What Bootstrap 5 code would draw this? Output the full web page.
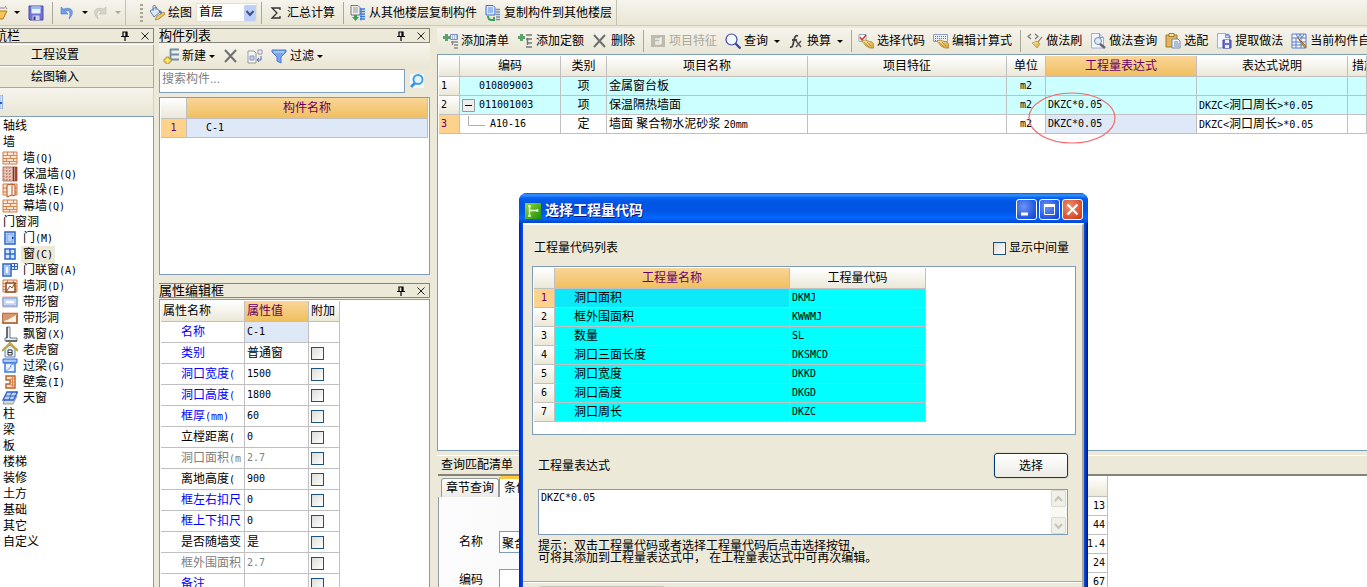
<!DOCTYPE html>
<html lang="zh-CN">
<head>
<meta charset="utf-8">
<meta name="viewport" content="width=device-width, initial-scale=1">
<title>选择工程量代码</title>
<link rel="stylesheet" href="https://cdn.jsdelivr.net/npm/bootstrap@5.3.0/dist/css/bootstrap.min.css">
<style>
  :root { --face:#ece9d8; --edge:#7f9db9; --grid:#c0c0c0; --hot:#660066; }
  body { font:12px/16px "Liberation Sans","Noto Sans CJK SC",sans-serif; color:#000; background:var(--face); overflow:hidden; }
  .mo { font-family:"DejaVu Sans Mono","Noto Sans CJK SC",monospace; font-size:10px; }
  .mo .cn { font-size:12px; }
  button, input, select, textarea { font:inherit; color:inherit; }
  svg { flex:none; display:block; }
  .ico { width:16px; height:16px; }

  .bar { background:linear-gradient(#f6f4ec,#e9e6d5); white-space:nowrap; }
  .bar .btn { --bs-btn-padding-x:0; --bs-btn-padding-y:0; --bs-btn-font-size:12px; --bs-btn-line-height:16px; --bs-btn-border-width:0; --bs-btn-border-radius:0; --bs-btn-color:#000;
    display:inline-flex; align-items:center; gap:3px; flex:none; margin-right:8px; }
  .bar .btn:disabled { color:#aca899; opacity:1; }
  .rule { width:1px; height:22px; background:#aca899; margin-right:6px; flex:none; }
  .caret { border:3px solid transparent; border-top-color:#000; border-bottom:0; margin-left:3px; }
  .caret-off { border-top-color:#aca899; }
  .top-bar { height:26px; border-bottom:1px solid #cfcbb8; }
  .top-set { height:25px; border-right:1px solid #c5c2b0; }
  .grip { width:3px; height:18px; margin:0 6px; background:repeating-linear-gradient(#a9a695 0 2px,transparent 2px 4px); }
  .floor { width:61px; height:19px; border:1px solid #e4e1d0; appearance:none; border-radius:0; padding:0 2px 2px; line-height:16px;
    background:url("data:image/svg+xml,%3Csvg xmlns='http://www.w3.org/2000/svg' width='12' height='16'%3E%3Crect width='12' height='16' rx='1' fill='%23bfd0f8'/%3E%3Cpath d='M2.500 6l3.500 4 3.500-4' fill='none' stroke='%23405088' stroke-width='2'/%3E%3C/svg%3E") right center no-repeat #fff; }
  .desk { min-height:0; padding-top:2px; }

  .cap-bar { height:15px; border:1px solid #85837a; font-size:13px; line-height:13px; white-space:nowrap; }
  .cap-bar button { border:0; background:none; padding:0; }
  .side { width:154px; }
  .side .cap-bar { margin-bottom:1px; }
  .clip-start { margin-left:-6px; }
  .side-btn { height:22px; border:1px solid #aca899; border-width:1px 1px 1px 0; border-top-color:#fff; background:var(--face); padding:0 43px 0 0; }
  .side-tools { height:28px; border-right:1px solid #d5d1bd; }
  .tree { background:#fff; border:1px solid var(--edge); border-width:1px 1px 0 0; padding-top:1px; }
  .tree li { height:16px; display:flex; align-items:center; padding-left:3px; white-space:nowrap; }
  .tree li.kid { padding-left:2px; gap:3px; }
  .tree .now { background:var(--face); }
  .tree li.kid > span { padding:0 2px; }

  .mid { width:271px; margin-left:5px; }
  .mid-tools { height:26px; }
  .well { background:#fff; border:1px solid var(--edge); }
  .find { height:24px; border:1px solid var(--edge); padding:0 2px 4px; width:246px; border-radius:0; }
  .find::placeholder { color:#808080; opacity:1; }
  .comp-box { height:178px; padding:0 1px; }
  .prop-box { margin-top:1px; padding:1px; }

  .sheet { table-layout:fixed; border-collapse:separate; border-spacing:0; white-space:nowrap; }
  .sheet th, .sheet td { border:solid var(--grid); border-width:0 1px 1px 0; padding:0 2px; overflow:hidden; height:19px; line-height:16px; font-weight:400; }
  .sheet thead th { height:21px; text-align:center; background:linear-gradient(#fff,#f3f1e8 60%,#ebe8d7); }
  .sheet thead th.hot { background:linear-gradient(#f9d598,#f0bf5f); color:var(--hot); }
  .sheet tbody th { background:linear-gradient(#fff,#ebe8d7); }
  .sheet tbody th.hot { background:#ffd28c; color:var(--hot); }
  .sheet .pick { background:#dfe8f6; }
  .sheet td.inset { padding-left:19px; }
  .aqua td { background:#ccffff; }
  .cyan td { background:#00ffff; }
  .cyan td.first-cell { background:#0ce9f9; }
  .props { width:179px; }
  .props th, .props td { height:21px; }
  .props tbody th { background:#fff; padding-left:20px; text-align:left; }
  .props .user { color:#0000ff; }
  .props .off { color:#808080; }
  .tick { appearance:none; width:13px; height:13px; border:1px solid #1c5180; background:linear-gradient(135deg,#dcdcd7,#fff); margin:0; display:block; flex:none; }

  .work { margin-left:7px; min-width:0; }
  .main-tools { height:26px; padding-left:5px; }
  .bill-box { padding:1px 0 0 1px; }
  .dock { height:132px; border-top:1px solid #fff; }
  .dock-cap { height:18px; line-height:18px; }
  .dock-body { border-top:2px solid #85837a; margin-left:1px; }
  .tab-strip { height:21px; padding-left:3px; background:var(--face); }
  .tab-strip button { height:19px; border:1px solid #919b9c; border-width:1px 1px 0 1px; border-radius:3px 3px 0 0; background:linear-gradient(#fff,#ecebe6); padding:0 4px; }
  .tab-strip button.on { height:21px; border-top:3px solid #ffc73c; background:#fcfcfe; }
  .form-side { width:300px; padding:34px 0 0 20px; background:linear-gradient(90deg,#fcfcfe,#f4f3ee); border-left:1px solid #919b9c; }
  .res { width:370px; }
  .box { border:1px solid var(--edge); height:22px; border-radius:0; padding:0 2px; background:#fff; }

  .loop { left:1028px; top:92px; width:88px; height:52px; pointer-events:none; }
  .dlg { left:519px; top:193px; width:569px; border-radius:8px 8px 0 0; background:linear-gradient(90deg,#0019cf,#0855dd 4px,#0855dd 565px,#00138c); padding:0 4px; }
  .dlg-top { height:30px; margin:0 -4px; padding:6px 5px 0 6px; border-radius:8px 8px 0 0; background:linear-gradient(#0058e6,#3a93ff 2px,#0262ee 5px,#0054e3 10px,#0055e5 18px,#0268ff 25px,#0144d0); }
  .dlg-title { font-size:14px; line-height:14px; font-weight:700; color:#fff; text-shadow:1px 1px #0a1883; }
  .dlg-top .btn-set { gap:2px; }
  .win-btn { width:21px; height:21px; padding:0; border:1px solid #fff; border-radius:3px; background:radial-gradient(circle at 35% 35%,#6d93f2,#2a5de4 60%,#0a3fc9); }
  .win-btn.shut { background:radial-gradient(circle at 35% 35%,#f0906e,#df5433 60%,#c23a10); }
  .dlg-body { background:var(--face); border-top:2px solid #fff; border-right:2px solid #aca899; min-height:400px; }
  .list-head { padding:15px 13px 10px 11px; }
  .list-head .tick { margin-right:3px; }
  .code-box { height:169px; margin:0 6px 0 9px; padding:1px; }
  .code-box .sheet { width:392px; }
  .expr-head { padding:18px 14px 11px 15px; }
  .expr-wrap { margin:0 14px 0 15px; }
  .pick-btn { width:74px; height:25px; border:1px solid #003c74; border-radius:3px; background:linear-gradient(#fff,#ecebe5); box-shadow:0 0 0 1px #dfdccb; }
  .expr { height:46px; resize:none; border:1px solid var(--edge); border-radius:0; padding:0 2px; line-height:16px; display:block; overflow:hidden; }
  .scroller { right:1px; top:1px; bottom:1px; width:17px; background:#f8f8f4; }
  .scroller button { width:15px; height:17px; border:1px solid #dcdacb; border-radius:2px; background:#f1f0e8; padding:0; }
  .hint { line-height:12px; padding:5px 15px 17px; }
  .foot { border-top:1px solid #aca899; box-shadow:inset 0 1px #fff; padding:4px 15px; }
  .foot button { width:128px; height:24px; border:1px solid #c9c7ba; border-radius:3px; background:#f1efe4; }
</style>
</head>
<body>
<svg width="0" height="0" class="position-absolute" aria-hidden="true">
  <defs>
    <linearGradient id="gb" x2="1" y2="1"><stop stop-color="#e8f2ff"/><stop offset="1" stop-color="#5b92ea"/></linearGradient>
    <linearGradient id="gy" x2="1" y2="1"><stop stop-color="#fff2b0"/><stop offset="1" stop-color="#d99a2c"/></linearGradient>
    <linearGradient id="gg" x2="1" y2="1"><stop stop-color="#8fe02c"/><stop offset="1" stop-color="#1f8a10"/></linearGradient>
  </defs>
  <symbol id="pin" viewBox="0 0 8 10"><path d="M2 1h4v4.500h-4zM5 1v5M0 5.500h8M4 6v4" fill="none" stroke="#000" stroke-width="1.200"/></symbol>
  <symbol id="shut" viewBox="0 0 8 8"><path d="M.500.500l7 7M7.500.500l-7 7" stroke="#222" fill="none"/></symbol>
  <symbol id="save" viewBox="0 0 16 16"><path d="M1 1h14v14H2l-1-1z" fill="#6f72d2" stroke="#4a4ca8"/><path d="M3.500 1.500h9v7h-9z" fill="#e9effc"/><path d="M4.500 10.500h7V15h-7z" fill="#cfd3ea"/><path d="M5.500 11.500h2V15h-2z" fill="#333a80"/><path d="M4 3h8" stroke="#8ec0f5" stroke-width="2"/></symbol>
  <symbol id="undo" viewBox="0 0 16 16"><path d="M2 2v7h7L6.500 6.500C10 4 12.500 7 10 14c6-6 4-13-5.500-10z" fill="#6f9de8" stroke="#4e7dcc" stroke-width=".6"/></symbol>
  <symbol id="redo" viewBox="0 0 16 16"><path d="M14 2v7H7l2.500-2.500C6 4 3.500 7 6 14 0 8 2 1 11.500 4z" fill="#d6d5cd" stroke="#bdbcb2" stroke-width=".6"/></symbol>
  <symbol id="paint" viewBox="0 0 16 16"><path d="M1 6l6-4 4 5-6 5z" fill="#dbe7f8" stroke="#6480ae"/><path d="M4 6V1.500C4 0 7 0 7 2v3" fill="none" stroke="#6480ae"/><path d="M10 6c3 1 3 4 1 6" stroke="#5577b8" stroke-width="2" fill="none"/><path d="M6 15l2-4 7-4 1 2-6 5z" fill="url(#gy)" stroke="#a87a26" stroke-width=".7"/></symbol>
  <symbol id="down" viewBox="0 0 16 16"><path d="M1 .500h7l2 2V10H1z" fill="#eee" stroke="#777"/><path d="M3 3h5M3 5h5M3 7h5" stroke="#999"/><path d="M10 4h5M10 6.500h5M10 9h5M10 11.500h5M10 14h5" stroke="#3d78dd" stroke-width="1.600"/><path d="M11 3.500v12" stroke="#3d78dd"/><path d="M4 10h3v2h2l-3.500 4L2 12h2z" fill="#37a057"/></symbol>
  <symbol id="across" viewBox="0 0 16 16"><path d="M1 .500h7l2 2V10H1z" fill="#dce9ff" stroke="#3c6dcc"/><path d="M3 3h5M3 5h5M3 7h5" stroke="#5d8de0"/><path d="M11 4.500h4M11 7h4M11 9.500h4M11 12h4M11 14.500h4" stroke="#7c8da8" stroke-width="1.600"/><path d="M3 11c0 3 2 4 4 4h2v-3" fill="none" stroke="#37a057" stroke-width="2"/></symbol>
  <symbol id="new" viewBox="0 0 16 16"><path d="M7 1.500h9M7 6.500h9M7 11.500h9M7.500 1v11" stroke="#6d8fa8" stroke-width="1.800" fill="none"/><path d="M3 9h3v2h2v3H6v2H3v-2H1v-3h2z" fill="#ffe36a" stroke="#a88a1c" stroke-width=".8"/></symbol>
  <symbol id="del" viewBox="0 0 16 16"><path d="M2 2l11 12M13 2L2 14" stroke="#6f6f6f" stroke-width="2" fill="none"/></symbol>
  <symbol id="copy" viewBox="0 0 16 16"><path d="M1 3h6l2 2v10H1z" fill="#f5f5f5" stroke="#999"/><path d="M3 8h4v4H3z" fill="#c7d3ea" stroke="#8898b8"/><path d="M11 2h4v4h-4z" fill="#eef" stroke="#99a"/><path d="M14 8v4h-3m1-2l-2 2 2 2" fill="none" stroke="#4568b8"/></symbol>
  <symbol id="funnel" viewBox="0 0 16 16"><path d="M1 2h14v2L10 9v6l-4-2V9L1 4z" fill="#78a7f0" stroke="#4a7ac8"/><path d="M3 4h10" stroke="#cfe1ff"/></symbol>
  <symbol id="lens" viewBox="0 0 16 16"><path d="M1 1h14v14H1z" fill="#f4f8fb"/><circle cx="9" cy="6.500" r="4.500" fill="#e6f4ff" stroke="#42a2e8" stroke-width="2"/><path d="M6 10l-4 4" stroke="#3a8fd8" stroke-width="2.600"/></symbol>
  <symbol id="look" viewBox="0 0 16 16"><circle cx="6.500" cy="6.500" r="5.500" fill="#f2f8ff" stroke="#3c46a8" stroke-width="1.200"/><path d="M10.500 10.500l5 5" stroke="#3a3aa5" stroke-width="2.200"/></symbol>
  <symbol id="addl" viewBox="0 0 16 16"><path d="M3 1h3v2h2v3H6v2H3V6H1V3h2z" fill="#5f9f68"/><path d="M8.500 1.500h7v5h-7z" fill="#dfe9f8" stroke="#7d93bc"/><path d="M10 3h5M10 5h5" stroke="#7d93bc" stroke-dasharray="1 1"/><path d="M9 9h7M12 12h4M12 15h4M10.500 8v4" stroke="#8b8b8b" stroke-width="1.500"/></symbol>
  <symbol id="addq" viewBox="0 0 16 16"><path d="M3 1h3v2h2v3H6v2H3V6H1V3h2z" fill="#5f9f68"/><path d="M9 2h6M9 6h6M11 10h4M9 14h6M10.500 5v7" stroke="#777" stroke-width="1.500"/></symbol>
  <symbol id="feat" viewBox="0 0 16 16"><path d="M1 2h14v12H1z" fill="#bdbbb0"/><path d="M5 6h5v5H6V9h4M11 11V4" stroke="#f0efe8" fill="none" stroke-width="1.500"/></symbol>
  <symbol id="fx" viewBox="0 0 16 16"><path d="M2 14c3 1 3-3 4-7s2-5 4-4M4 7h5" fill="none" stroke="#444" stroke-width="1.800"/><path d="M8 8l5 6M13 8l-5 6" stroke="#555" stroke-width="1.500"/></symbol>
  <symbol id="hand" viewBox="0 0 16 16"><path d="M4 8l3-1 3 1 4 1 2 3v3h-4L8 13z" fill="url(#gy)" stroke="#a98530" stroke-width=".8"/><path d="M6 9l5 5M9 9l4 4" stroke="#a98530" stroke-width=".7"/></symbol>
  <symbol id="code" viewBox="0 0 16 16"><path d="M1 1.500h7v7H1z" fill="#fff" stroke="#98a5c0"/><path d="M2 4l2 3 4-5" fill="none" stroke="#d23b2d" stroke-width="1.500"/><use href="#hand"/></symbol>
  <symbol id="edit" viewBox="0 0 16 16"><path d="M.500 1.500h14v7H.500z" fill="#e8effb" stroke="#8fa2c6"/><path d="M2 3.500h12M2 5.500h12M2 7.500h6" stroke="#5c77ae" stroke-dasharray="1 1"/><use href="#hand"/></symbol>
  <symbol id="brush" viewBox="0 0 16 16"><path d="M4 1L1 3.500 4 6M8 1l3 2.500L8 6M15 4l-4 5" fill="none" stroke="#777" stroke-width="1.200"/><path d="M5 10l5-2 3 3-3 4z" fill="url(#gy)" stroke="#b08b35" stroke-width=".7"/></symbol>
  <symbol id="page" viewBox="0 0 16 16"><path d="M1.500.500h8l4 4V15h-12z" fill="#f2f7ff" stroke="#9cb0d8"/><path d="M9.500.500v4h4" fill="#c8daf8" stroke="#7f9ad0"/></symbol>
  <symbol id="seek" viewBox="0 0 16 16"><use href="#page"/><circle cx="8" cy="8" r="3.500" fill="#d9ecff" stroke="#7d8b9c"/><path d="M10 11l5 4" stroke="#5c6570" stroke-width="2.500"/></symbol>
  <symbol id="clip" viewBox="0 0 16 16"><path d="M1 2h11v12H1z" fill="#e2b45c" stroke="#a87822"/><path d="M4 .500h5v3H4z" fill="#f6e8b4" stroke="#a87822"/><path d="M7 6h6l2 2v7H7z" fill="#eef4ff" stroke="#7085ad"/><path d="M9 9h4M9 11h5M9 13h5" stroke="#7085ad"/></symbol>
  <symbol id="pull" viewBox="0 0 16 16"><use href="#page"/><path d="M7 7h8v8H7z" fill="#6a70cc" stroke="#4246a0"/><path d="M9 7h4v3H9zM9 12h4v3H9z" fill="#eef"/><path d="M14 5c0-3-2-4-4-3" fill="none" stroke="#6080c0" stroke-width="1.500"/></symbol>
  <symbol id="grid" viewBox="0 0 16 16"><path d="M1 1h14v14H1z" fill="#f3f7ff" stroke="#5a7dc8"/><path d="M1 5h14M1 9h14M1 12h14M5 5v10M10 5v10M5 1l2 4 2-4 2 4 2-4" stroke="#5a7dc8" fill="none"/><path d="M7 5l8 8-1 2z" fill="#e0aa3c" stroke="#9c6c20"/></symbol>
  <symbol id="brick" viewBox="0 0 16 16"><path d="M1 2h14v12H1z" fill="#fbe8d8" stroke="#cf7a42"/><path d="M1 5.500h14M1 8.500h14M1 11.500h14M5.500 2v3M11.500 2v3M8.500 5v3M4.500 8v3M11.500 8v3M7.500 11v3" stroke="#d8834c"/></symbol>
  <symbol id="warm" viewBox="0 0 16 16"><path d="M1 1h14v14H1z" fill="#e6c4b8" stroke="#b96c55"/><path d="M1 4.500h9M1 7.500h9M1 10.500h9M1 13.500h9M4.500 1v14M7.500 1v14" stroke="#c48a78" stroke-dasharray="2 1"/><path d="M11.500 1v14M14 1v14" stroke="#8e2c17" stroke-width="1.600"/></symbol>
  <symbol id="pier" viewBox="0 0 16 16"><path d="M1 2h14v11H1z" fill="#fbe2cf" stroke="#cf7a42"/><path d="M1 6h4M11 6h4M1 10h4M11 10h4" stroke="#cf7a42"/><path d="M5 3l5-1v11l-5 2zM10 2l3 1v10l-3 1" fill="#fff4ea" stroke="#b4521c"/></symbol>
  <symbol id="door" viewBox="0 0 16 16"><path d="M3 2h10v12H3z" fill="#d9e8ff" stroke="#2c62c8" stroke-width="1.500"/><path d="M5 4h6v8H5z" fill="#b5d2ff" stroke="#6fa0ec"/><path d="M10 8h1.500" stroke="#123a90" stroke-width="2"/></symbol>
  <symbol id="win" viewBox="0 0 16 16"><path d="M3 3h10v10H3zM8 3v10M3 8h10" fill="#d8e8ff" stroke="#2d66d2" stroke-width="1.500"/></symbol>
  <symbol id="dwin" viewBox="0 0 16 16"><path d="M1 2h8v12H1z" fill="#d9e8ff" stroke="#2c62c8" stroke-width="1.500"/><path d="M3 4h4v8H3z" fill="#eef5ff" stroke="#6fa0ec"/><path d="M9.500 1.500h6v6h-6zM12.500 1v7M9 4.500h6" fill="#e0ecff" stroke="#2c62c8"/></symbol>
  <symbol id="hole" viewBox="0 0 16 16"><use href="#brick"/><path d="M4 5h9v9H4z" fill="#fffaf4" stroke="#8e4a1c" stroke-width="1.500"/><path d="M4 14l4-6 2 2 3-5" fill="none" stroke="#8e4a1c"/></symbol>
  <symbol id="strip" viewBox="0 0 16 16"><path d="M0 2h16v12H0z" fill="#f8d2c6"/><path d="M1 4h14v8H1z" fill="#dce9ff" stroke="#5a8be0"/><path d="M3 6h10v4H3z" fill="#fff" stroke="#a5c0ee"/></symbol>
  <symbol id="slot" viewBox="0 0 16 16"><path d="M0 2h16v12H0z" fill="#f8d2c6"/><path d="M1 4h14v9H1z" fill="#fff1e3" stroke="#a4521e" stroke-width="1.500"/><path d="M1 11c5 0 8-4 14-6V4H1z" fill="#d39a70"/></symbol>
  <symbol id="bay" viewBox="0 0 16 16"><path d="M5 1h3v11h7v3H3v-3h2z" fill="#e8edf2" stroke="#6f7c88"/><path d="M5 1v11M4 15h11" stroke="#222"/></symbol>
  <symbol id="house" viewBox="0 0 16 16"><path d="M3 7v8h10V7L8 3z" fill="#e3eef6" stroke="#6d8797"/><path d="M0 9l8-8 8 8" fill="none" stroke="#c2a537" stroke-width="2"/><path d="M6 8h4v5H6zM6 10.500h4" fill="#fff" stroke="#334"/></symbol>
  <symbol id="lintel" viewBox="0 0 16 16"><path d="M1 1h14v4H1z" fill="#a9c9ff" stroke="#2d66d2"/><path d="M3 5h10v9H3z" fill="#e6f0ff" stroke="#3f78dc" stroke-width="1.500"/><path d="M4 13l4-3 1-3 3-1" stroke="#6a9bea" fill="none"/></symbol>
  <symbol id="niche" viewBox="0 0 16 16"><path d="M4 2h9v12H4v-4h4V6H4z" fill="#fde6d2" stroke="#b85f24" stroke-width="1.400"/><path d="M10.500 2v12M8 8h5M8 11h5M8 5h5" stroke="#cf8148"/></symbol>
  <symbol id="sky" viewBox="0 0 16 16"><path d="M4 6h11l-4 8H1z" fill="#d8d8d8" stroke="#999"/><path d="M5 2h10.500l-4 8H1z" fill="#b8d4ff" stroke="#2e60c8" stroke-width="1.300"/><path d="M10 2L7 10M3 6h11" stroke="#2e60c8"/></symbol>
</svg>

<div class="vh-100 d-flex flex-column overflow-hidden position-relative">

  <header class="bar top-bar d-flex flex-shrink-0">
    <div class="top-set d-flex align-items-center">
      <button class="btn" aria-label="打开"><svg width="8" height="16" viewBox="8 0 8 16"><path d="M3 6h12l-4 8H1z" fill="#f7c45a" stroke="#b07a1e"/><path d="M8 3h5M13 1l2 3" stroke="#888"/></svg><span class="caret"></span></button>
      <button class="btn me-1" aria-label="保存"><svg class="ico"><use href="#save"/></svg></button>
      <span class="rule ms-1"></span>
      <button class="btn me-1" aria-label="撤销"><svg class="ico"><use href="#undo"/></svg><span class="caret ms-1"></span></button>
      <button class="btn me-1" aria-label="恢复" disabled><svg class="ico"><use href="#redo"/></svg><span class="caret caret-off ms-1"></span></button>
    </div>
    <div class="top-set d-flex align-items-center ms-2">
      <span class="grip"></span>
      <button class="btn me-1"><svg class="ico"><use href="#paint"/></svg>绘图</button>
      <select class="floor me-1" aria-label="楼层"><option>首层</option></select>
      <span class="rule"></span>
      <button class="btn"><svg class="ico" viewBox="0 0 16 16"><path d="M12 5V3H4l5 5-5 5h8v-2" fill="none" stroke="#333" stroke-width="1.300"/></svg>汇总计算</button>
      <span class="rule"></span>
      <button class="btn"><svg class="ico"><use href="#down"/></svg>从其他楼层复制构件</button>
      <button class="btn me-1"><svg class="ico"><use href="#across"/></svg>复制构件到其他楼层</button>
    </div>
  </header>

  <div class="desk d-flex flex-grow-1">

    <nav class="side d-flex flex-column flex-shrink-0 overflow-hidden">
      <div class="cap-bar d-flex align-items-center border-start-0 flex-shrink-0">
        <span class="clip-start me-auto">航栏</span>
        <button class="me-2" aria-label="固定"><svg width="8" height="10"><use href="#pin"/></svg></button>
        <button class="ms-1 me-1" aria-label="关闭"><svg width="8" height="8"><use href="#shut"/></svg></button>
      </div>
      <button class="side-btn flex-shrink-0">工程设置</button>
      <button class="side-btn flex-shrink-0">绘图输入</button>
      <div class="bar side-tools d-flex align-items-center flex-shrink-0"><svg width="3" height="14"><path d="M0 0h2.500v14H0z" fill="#d6e6fb" stroke="#8fb3e6"/><path d="M0 8h2" stroke="#2a5fc0" stroke-width="2"/></svg></div>
      <ul class="tree list-unstyled mb-0 flex-grow-1">
        <li><span>轴线</span></li>
        <li><span>墙</span></li>
        <li class="kid"><svg class="ico"><use href="#brick"/></svg><span>墙<span class="mo">(Q)</span></span></li>
        <li class="kid"><svg class="ico"><use href="#warm"/></svg><span>保温墙<span class="mo">(Q)</span></span></li>
        <li class="kid"><svg class="ico"><use href="#pier"/></svg><span>墙垛<span class="mo">(E)</span></span></li>
        <li class="kid"><svg class="ico"><use href="#brick"/></svg><span>幕墙<span class="mo">(Q)</span></span></li>
        <li><span>门窗洞</span></li>
        <li class="kid"><svg class="ico"><use href="#door"/></svg><span>门<span class="mo">(M)</span></span></li>
        <li class="kid"><svg class="ico"><use href="#win"/></svg><span class="now">窗<span class="mo">(C)</span></span></li>
        <li class="kid"><svg class="ico"><use href="#dwin"/></svg><span>门联窗<span class="mo">(A)</span></span></li>
        <li class="kid"><svg class="ico"><use href="#hole"/></svg><span>墙洞<span class="mo">(D)</span></span></li>
        <li class="kid"><svg class="ico"><use href="#strip"/></svg><span>带形窗</span></li>
        <li class="kid"><svg class="ico"><use href="#slot"/></svg><span>带形洞</span></li>
        <li class="kid"><svg class="ico"><use href="#bay"/></svg><span>飘窗<span class="mo">(X)</span></span></li>
        <li class="kid"><svg class="ico"><use href="#house"/></svg><span>老虎窗</span></li>
        <li class="kid"><svg class="ico"><use href="#lintel"/></svg><span>过梁<span class="mo">(G)</span></span></li>
        <li class="kid"><svg class="ico"><use href="#niche"/></svg><span>壁龛<span class="mo">(I)</span></span></li>
        <li class="kid"><svg class="ico"><use href="#sky"/></svg><span>天窗</span></li>
        <li><span>柱</span></li>
        <li><span>梁</span></li>
        <li><span>板</span></li>
        <li><span>楼梯</span></li>
        <li><span>装修</span></li>
        <li><span>土方</span></li>
        <li><span>基础</span></li>
        <li><span>其它</span></li>
        <li><span>自定义</span></li>
      </ul>
    </nav>

    <section class="mid d-flex flex-column flex-shrink-0">
      <div class="cap-bar d-flex align-items-center border-start-0 flex-shrink-0">
        <span class="me-auto">构件列表</span>
        <button class="me-2" aria-label="固定"><svg width="8" height="10"><use href="#pin"/></svg></button>
        <button class="ms-1 me-1" aria-label="关闭"><svg width="8" height="8"><use href="#shut"/></svg></button>
      </div>
      <div class="bar mid-tools d-flex align-items-center ps-1 flex-shrink-0">
        <button class="btn"><svg class="ico"><use href="#new"/></svg>新建<span class="caret ms-0"></span></button>
        <button class="btn" aria-label="删除"><svg class="ico"><use href="#del"/></svg></button>
        <button class="btn me-2" aria-label="复制"><svg class="ico"><use href="#copy"/></svg></button>
        <button class="btn"><svg class="ico"><use href="#funnel"/></svg>过滤<span class="caret ms-0"></span></button>
      </div>
      <div class="d-flex align-items-center gap-1 flex-shrink-0">
        <input class="find" type="text" placeholder="搜索构件..." aria-label="搜索构件">
        <button class="border-0 p-0 bg-transparent" aria-label="搜索"><svg class="ico"><use href="#lens"/></svg></button>
      </div>
      <div class="well comp-box mt-1 flex-shrink-0">
        <table class="sheet w-100">
          <colgroup><col style="width:26px"><col></colgroup>
          <thead><tr><th></th><th class="hot">构件名称</th></tr></thead>
          <tbody><tr><th class="hot text-center mo">1</th><td class="pick inset mo">C-1</td></tr></tbody>
        </table>
      </div>
      <div class="cap-bar d-flex align-items-center border-start-0 mt-2 flex-shrink-0">
        <span class="me-auto">属性编辑框</span>
        <button class="me-2" aria-label="固定"><svg width="8" height="10"><use href="#pin"/></svg></button>
        <button class="ms-1 me-1" aria-label="关闭"><svg width="8" height="8"><use href="#shut"/></svg></button>
      </div>
      <div class="well prop-box flex-grow-1 overflow-hidden border-bottom-0">
        <table class="sheet props">
          <colgroup><col style="width:84px"><col style="width:64px"><col style="width:31px"></colgroup>
          <thead><tr><th class="text-start">属性名称</th><th class="hot text-start">属性值</th><th class="text-start">附加</th></tr></thead>
          <tbody>
            <tr><th class="user">名称</th><td class="pick mo">C-1</td><td></td></tr>
            <tr><th class="user">类别</th><td>普通窗</td><td><input class="tick" type="checkbox" aria-label="附加 类别"></td></tr>
            <tr><th class="user">洞口宽度<span class="mo">(</span></th><td class="mo">1500</td><td><input class="tick" type="checkbox" aria-label="附加 洞口宽度"></td></tr>
            <tr><th class="user">洞口高度<span class="mo">(</span></th><td class="mo">1800</td><td><input class="tick" type="checkbox" aria-label="附加 洞口高度"></td></tr>
            <tr><th class="user">框厚<span class="mo">(mm)</span></th><td class="mo">60</td><td><input class="tick" type="checkbox" aria-label="附加 框厚"></td></tr>
            <tr><th>立樘距离<span class="mo">(</span></th><td class="mo">0</td><td><input class="tick" type="checkbox" aria-label="附加 立樘距离"></td></tr>
            <tr><th class="off">洞口面积<span class="mo">(m</span></th><td class="mo off">2.7</td><td><input class="tick" type="checkbox" aria-label="附加 洞口面积"></td></tr>
            <tr><th>离地高度<span class="mo">(</span></th><td class="mo">900</td><td><input class="tick" type="checkbox" aria-label="附加 离地高度"></td></tr>
            <tr><th class="user">框左右扣尺</th><td class="mo">0</td><td><input class="tick" type="checkbox" aria-label="附加 框左右扣尺"></td></tr>
            <tr><th class="user">框上下扣尺</th><td class="mo">0</td><td><input class="tick" type="checkbox" aria-label="附加 框上下扣尺"></td></tr>
            <tr><th>是否随墙变</th><td>是</td><td><input class="tick" type="checkbox" aria-label="附加 是否随墙变"></td></tr>
            <tr><th class="off">框外围面积</th><td class="mo off">2.7</td><td><input class="tick" type="checkbox" aria-label="附加 框外围面积"></td></tr>
            <tr><th class="user">备注</th><td></td><td><input class="tick" type="checkbox" aria-label="附加 备注"></td></tr>
          </tbody>
        </table>
      </div>
    </section>

    <main class="work flex-grow-1 d-flex flex-column overflow-hidden">
      <div class="bar main-tools d-flex align-items-center flex-shrink-0 overflow-hidden">
        <button class="btn"><svg class="ico"><use href="#addl"/></svg>添加清单</button>
        <button class="btn"><svg class="ico"><use href="#addq"/></svg>添加定额</button>
        <button class="btn"><svg class="ico"><use href="#del"/></svg>删除</button>
        <span class="rule"></span>
        <button class="btn" disabled><svg class="ico"><use href="#feat"/></svg>项目特征</button>
        <button class="btn"><svg class="ico"><use href="#look"/></svg>查询<span class="caret"></span></button>
        <button class="btn"><svg class="ico"><use href="#fx"/></svg>换算<span class="caret"></span></button>
        <span class="rule"></span>
        <button class="btn"><svg class="ico"><use href="#code"/></svg>选择代码</button>
        <button class="btn"><svg class="ico"><use href="#edit"/></svg>编辑计算式</button>
        <span class="rule"></span>
        <button class="btn"><svg class="ico"><use href="#brush"/></svg>做法刷</button>
        <button class="btn"><svg class="ico"><use href="#seek"/></svg>做法查询</button>
        <button class="btn"><svg class="ico"><use href="#clip"/></svg>选配</button>
        <button class="btn"><svg class="ico"><use href="#pull"/></svg>提取做法</button>
        <button class="btn"><svg class="ico"><use href="#grid"/></svg>当前构件自</button>
      </div>
      <div class="well bill-box border-end-0 flex-grow-1 overflow-hidden">
        <table class="sheet w-100">
          <colgroup><col style="width:21px"><col style="width:101px"><col style="width:46px"><col style="width:201px"><col style="width:199px"><col style="width:39px"><col style="width:151px"><col style="width:151px"><col></colgroup>
          <thead><tr><th></th><th>编码</th><th>类别</th><th>项目名称</th><th>项目特征</th><th>单位</th><th class="hot">工程量表达式</th><th>表达式说明</th><th class="text-start ps-1">措施</th></tr></thead>
          <tbody>
            <tr class="aqua"><th class="mo">1</th><td class="mo inset">010809003</td><td class="text-center">项</td><td>金属窗台板</td><td></td><td class="text-center mo">m2</td><td></td><td></td><td></td></tr>
            <tr class="aqua"><th class="mo">2</th><td class="mo"><div class="d-flex align-items-center"><svg width="13" height="13" class="me-1"><path d="M.500.500h12v12H.500z" fill="#eee" stroke="#999"/><path d="M3 6.500h7" stroke="#000"/></svg>011001003</div></td><td class="text-center">项</td><td>保温隔热墙面</td><td></td><td class="text-center mo">m2</td><td class="mo">DKZC*0.05</td><td class="mo">DKZC&lt;<span class="cn">洞口周长</span>&gt;*0.05</td><td></td></tr>
            <tr><th class="mo hot">3</th><td class="mo"><div class="d-flex"><svg width="24" height="16" class="me-1"><path d="M6.500 0v9.500H23" fill="none" stroke="#b0b0b0"/></svg>A10-16</div></td><td class="text-center">定</td><td>墙面 聚合物水泥砂浆 <span class="mo">20mm</span></td><td></td><td class="text-center mo">m2</td><td class="mo pick">DKZC*0.05</td><td class="mo">DKZC&lt;<span class="cn">洞口周长</span>&gt;*0.05</td><td></td></tr>
          </tbody>
        </table>
      </div>
      <section class="dock mt-1 flex-shrink-0 d-flex flex-column overflow-hidden">
        <div class="dock-cap px-1">查询匹配清单</div>
        <div class="dock-body d-flex flex-grow-1 bg-white">
          <div class="d-flex flex-column">
            <div class="tab-strip d-flex align-items-end">
              <button>章节查询</button><button class="on">条件查询</button>
            </div>
            <div class="form-side flex-grow-1 d-flex flex-column gap-3">
              <div class="d-flex align-items-center gap-3"><label for="nm">名称</label><input id="nm" class="box" type="text" value="聚合物"></div>
              <div class="d-flex align-items-center gap-3"><label for="cd">编码</label><input id="cd" class="box" type="text"></div>
            </div>
          </div>
          <div class="res">
            <table class="sheet w-100 text-end mo">
              <thead><tr><th></th></tr></thead>
              <tbody><tr><td>13</td></tr><tr><td>44</td></tr><tr><td>1.4</td></tr><tr><td>24</td></tr><tr><td>67</td></tr></tbody>
            </table>
          </div>
        </div>
      </section>
    </main>
  </div>

  <svg class="loop position-absolute" viewBox="0 0 88 52"><ellipse cx="44" cy="26" rx="43" ry="25" fill="none" stroke="#f06a6a" stroke-width="1.200"/></svg>

  <div class="dlg position-absolute" role="dialog" aria-labelledby="dt">
    <div class="dlg-top d-flex align-items-start">
      <svg class="ico mt-1" viewBox="0 0 16 16"><path d="M0 0h16v16H0z" fill="url(#gg)"/><path d="M4.500 3v10M3 3h3M3 13h3M5 7.500h8M12.500 6v3" stroke="#e8ffe0" stroke-width="1.500" fill="none"/></svg>
      <span id="dt" class="dlg-title ms-1 me-auto mt-1">选择工程量代码</span>
      <div class="btn-set d-flex">
        <button class="win-btn" aria-label="最小化"><svg width="19" height="19"><path d="M4 14h7" stroke="#fff" stroke-width="3"/></svg></button>
        <button class="win-btn" aria-label="最大化"><svg width="19" height="19"><path d="M4.500 5v9.500h10V5" fill="none" stroke="#fff"/><path d="M4 5.500h11" stroke="#fff" stroke-width="3"/></svg></button>
        <button class="win-btn shut" aria-label="关闭"><svg width="19" height="19"><path d="M4.500 4.500l10 10M14.500 4.500l-10 10" stroke="#fff" stroke-width="2.200"/></svg></button>
      </div>
    </div>
    <div class="dlg-body">
      <div class="list-head d-flex align-items-center">
        <span class="me-auto">工程量代码列表</span>
        <input class="tick" type="checkbox" id="mid"><label for="mid">显示中间量</label>
      </div>
      <div class="well code-box">
        <table class="sheet">
          <colgroup><col style="width:21px"><col style="width:235px"><col style="width:136px"></colgroup>
          <thead><tr><th></th><th class="hot">工程量名称</th><th>工程量代码</th></tr></thead>
          <tbody class="cyan">
            <tr><th class="hot text-center mo">1</th><td class="first-cell inset">洞口面积</td><td class="mo">DKMJ</td></tr>
            <tr><th class="text-center mo">2</th><td class="inset">框外围面积</td><td class="mo">KWWMJ</td></tr>
            <tr><th class="text-center mo">3</th><td class="inset">数量</td><td class="mo">SL</td></tr>
            <tr><th class="text-center mo">4</th><td class="inset">洞口三面长度</td><td class="mo">DKSMCD</td></tr>
            <tr><th class="text-center mo">5</th><td class="inset">洞口宽度</td><td class="mo">DKKD</td></tr>
            <tr><th class="text-center mo">6</th><td class="inset">洞口高度</td><td class="mo">DKGD</td></tr>
            <tr><th class="text-center mo">7</th><td class="inset">洞口周长</td><td class="mo">DKZC</td></tr>
          </tbody>
        </table>
      </div>
      <div class="expr-head d-flex align-items-center">
        <label class="me-auto" for="ex">工程量表达式</label>
        <button class="pick-btn">选择</button>
      </div>
      <div class="expr-wrap position-relative">
        <textarea id="ex" class="expr w-100 mo">DKZC*0.05</textarea>
        <div class="scroller position-absolute d-flex flex-column justify-content-between align-items-center">
          <button aria-label="上"><svg width="13" height="14"><path d="M3 9l3.500-4L10 9" fill="none" stroke="#c5c3b8" stroke-width="2"/></svg></button>
          <button aria-label="下"><svg width="13" height="14"><path d="M3 5l3.500 4L10 5" fill="none" stroke="#c5c3b8" stroke-width="2"/></svg></button>
        </div>
      </div>
      <p class="hint mb-0">提示：双击工程量代码或者选择工程量代码后点击选择按钮，<br>可将其添加到工程量表达式中， 在工程量表达式中可再次编辑。</p>
      <div class="foot"><button aria-label="更多"></button></div>
    </div>
  </div>
</div>
<script src="https://cdn.jsdelivr.net/npm/bootstrap@5.3.0/dist/js/bootstrap.bundle.min.js"></script>
</body>
</html>
